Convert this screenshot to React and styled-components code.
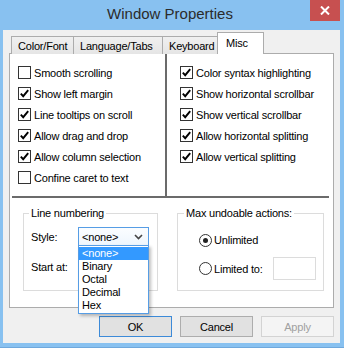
import React from 'react';
import styled, { createGlobalStyle } from 'styled-components';

const GlobalStyle = createGlobalStyle`
  body {
    margin: 0;
    background: #88c1f0;
    font-family: "Liberation Sans", Arial, sans-serif;
    font-size: 11px;
    letter-spacing: -0.2px;
    color: #000;
  }
`

const Window = styled.div`
  width: 344px;
  height: 348px;
  background: #88c1f0;
  display: flex;
  flex-direction: column;
  box-sizing: border-box;
  border-bottom: 1px solid #6fa8dc;
`

const TitleBar = styled.div`
  height: 30px;
  display: grid;
  grid-template-columns: 1fr auto 1fr;
  padding-right: 4px;
`

const Title = styled.div`
  grid-column: 2;
  line-height: 28px;
  font-size: 15px;
  letter-spacing: 0;
  color: #2b2b2b;
`

const CloseButton = styled.div`
  grid-column: 3;
  justify-self: end;
  width: 30px;
  height: 21px;
  background: #c75050;
  display: flex;
  align-items: center;
  justify-content: center;
`

const Client = styled.div`
  flex: 1;
  margin: 0 4px 4px 3px;
  background: #f0f0f0;
  display: flex;
  flex-direction: column;
`

const TabRow = styled.div`
  display: flex;
  align-items: flex-end;
  height: 22px;
  margin: 2px 0 -1px 8px;
`

const Tab = styled.div`
  box-sizing: border-box;
  width: ${p => p.$w}px;
  height: ${p => (p.$active ? 22 : 18)}px;
  border: 1px solid #acacac;
  border-bottom: none;
  margin-left: ${p => (p.$first ? 0 : -1)}px;
  background: ${p => (p.$active ? '#fff' : 'linear-gradient(#f0f0f0, #e5e5e5)')};
  padding: ${p => (p.$active ? '3px 0 0 8px' : '2px 0 0 6px')};
  line-height: 14px;
  position: relative;
  z-index: ${p => (p.$active ? 2 : 0)};
`

const Panel = styled.div`
  box-sizing: border-box;
  width: 325px;
  height: 255px;
  margin-left: 6px;
  background: #fff;
  border: 1px solid #acacac;
  display: flex;
  flex-direction: column;
`

const TopSection = styled.div`
  height: 142px;
  display: grid;
  grid-template-columns: 155px 2px 1fr;
`

const OptionColumn = styled.div`
  padding: 8px 0 0 ${p => p.$indent}px;
`

const VerticalRule = styled.div`
  background: #6b6b6b;
`

const HorizontalRule = styled.div`
  height: 2px;
  margin: 0 4px 0 2px;
  background: #6b6b6b;
`

const OptionRow = styled.label`
  display: flex;
  align-items: center;
  height: 21px;
  gap: 3px;
`

const Box = styled.span`
  box-sizing: border-box;
  width: 13px;
  height: 13px;
  border: 1px solid #333;
  background: #fff;
  display: flex;
  align-items: center;
  justify-content: center;
`

const BottomSection = styled.div`
  display: flex;
  padding: 8px 0 0 13px;
  gap: 19px;
`

const Group = styled.fieldset`
  box-sizing: border-box;
  margin: 0;
  width: ${p => p.$w}px;
  height: 85px;
  border: 1px solid #dcdcdc;
  padding: 0;
  min-inline-size: 0;
`

const Legend = styled.legend`
  padding: 0 2px;
  margin-left: ${p => p.$ml}px;
  line-height: 14px;
`

const GroupBody = styled.div`
  padding: ${p => p.$pad};
`

const FieldGrid = styled.div`
  display: grid;
  grid-template-columns: 47px 71px;
  grid-template-rows: 19px 19px;
  row-gap: 11px;
  align-items: center;
`

const Combo = styled.div`
  position: relative;
  box-sizing: border-box;
  height: 19px;
  border: 1px solid #569de5;
  background: linear-gradient(#fbfdff, #eef6fd);
  display: flex;
  align-items: center;
  justify-content: space-between;
  padding: 0 5px 0 3px;
`

const DropList = styled.ul`
  position: absolute;
  top: 100%;
  left: -1px;
  width: 71px;
  box-sizing: border-box;
  margin: 0;
  padding: 1px 0;
  list-style: none;
  background: #fff;
  border: 1px solid #569de5;
  box-shadow: 2px 2px 3px rgba(0, 0, 0, 0.25);
  z-index: 5;
`

const DropItem = styled.li`
  height: 13px;
  line-height: 13px;
  padding-left: 3px;
  background: ${p => (p.$selected ? '#3399ff' : 'transparent')};
  color: ${p => (p.$selected ? '#fff' : '#000')};
`

const SmallInput = styled.div`
  box-sizing: border-box;
  height: ${p => p.$h}px;
  border: 1px solid #dcdcdc;
  background: #fff;
  width: ${p => p.$w}px;
  margin-left: ${p => p.$ml || 0};
`

const RadioRow = styled.label`
  display: flex;
  align-items: center;
  gap: 2px;
  height: ${p => p.$h}px;
  margin-top: ${p => p.$mt || 0}px;
`

const RadioCircle = styled.span`
  box-sizing: border-box;
  width: 13px;
  height: 13px;
  border-radius: 50%;
  border: 1px solid #333;
  background: #fff;
  display: flex;
  align-items: center;
  justify-content: center;

  &::after {
    content: '';
    display: ${p => (p.$on ? 'block' : 'none')};
    width: 5px;
    height: 5px;
    border-radius: 50%;
    background: #222;
  }
`

const ButtonRow = styled.div`
  display: flex;
  justify-content: flex-end;
  gap: 8px;
  margin-top: 8px;
  padding-right: 6px;
`

const Button = styled.div`
  box-sizing: border-box;
  width: 73px;
  height: 21px;
  display: flex;
  align-items: center;
  justify-content: center;
  background: ${p => (p.$disabled ? '#f4f4f4' : '#e1e1e1')};
  border: 1px solid ${p => (p.$default ? '#3c8ad8' : p.$disabled ? '#d3d3d3' : '#adadad')};
  color: ${p => (p.$disabled ? '#a0a0a0' : '#000')};
`

const Check = () => (
  <svg width="11" height="11" viewBox="0 0 11 11">
    <polyline points="1.8,5.6 4.2,8.2 9.2,2.2" fill="none" stroke="#000" strokeWidth="1.9" />
  </svg>
)

const Option = ({ checked, children }) => (
  <OptionRow>
    <Box>{checked && <Check />}</Box>
    {children}
  </OptionRow>
)

const leftOptions = [
  ['Smooth scrolling', false],
  ['Show left margin', true],
  ['Line tooltips on scroll', true],
  ['Allow drag and drop', true],
  ['Allow column selection', true],
  ['Confine caret to text', false],
]

const rightOptions = [
  ['Color syntax highlighting', true],
  ['Show horizontal scrollbar', true],
  ['Show vertical scrollbar', true],
  ['Allow horizontal splitting', true],
  ['Allow vertical splitting', true],
]

const tabs = [
  ['Color/Font', 63],
  ['Language/Tabs', 90],
  ['Keyboard', 56],
  ['Misc', 47],
]

const styles = ['<none>', 'Binary', 'Octal', 'Decimal', 'Hex']

const App = () => (
  <>
    <GlobalStyle />
    <Window>
      <TitleBar>
        <Title>Window Properties</Title>
        <CloseButton>
          <svg width="10" height="9" viewBox="0 0 10 9">
            <path d="M1 0.5 L9 8.5 M9 0.5 L1 8.5" stroke="#fff" strokeWidth="2" />
          </svg>
        </CloseButton>
      </TitleBar>
      <Client>
        <TabRow>
          {tabs.map(([name, w], i) => (
            <Tab key={name} $w={w} $first={i === 0} $active={name === 'Misc'}>{name}</Tab>
          ))}
        </TabRow>
        <Panel>
          <TopSection>
            <OptionColumn $indent={8}>
              {leftOptions.map(([label, on]) => <Option key={label} checked={on}>{label}</Option>)}
            </OptionColumn>
            <VerticalRule />
            <OptionColumn $indent={13}>
              {rightOptions.map(([label, on]) => <Option key={label} checked={on}>{label}</Option>)}
            </OptionColumn>
          </TopSection>
          <HorizontalRule />
          <BottomSection>
            <Group $w={135}>
              <Legend $ml={5}>Line numbering</Legend>
              <GroupBody $pad="7px 0 0 7px">
                <FieldGrid>
                  <span>Style:</span>
                  <Combo>
                    <span>&lt;none&gt;</span>
                    <svg width="9" height="6" viewBox="0 0 9 6">
                      <path d="M1 1 L4.5 4.5 L8 1" fill="none" stroke="#444" strokeWidth="1.6" />
                    </svg>
                    <DropList>
                      {styles.map((s, i) => <DropItem key={s} $selected={i === 0}>{s}</DropItem>)}
                    </DropList>
                  </Combo>
                  <span>Start at:</span>
                  <SmallInput $w={50} $h={21} />
                </FieldGrid>
              </GroupBody>
            </Group>
            <Group $w={147}>
              <Legend $ml={6}>Max undoable actions:</Legend>
              <GroupBody $pad="10px 7px 0 21px">
                <RadioRow $h={20}>
                  <RadioCircle $on />
                  Unlimited
                </RadioRow>
                <RadioRow $h={23} $mt={7}>
                  <RadioCircle />
                  Limited to:
                  <SmallInput $w={43} $h={23} $ml="auto" />
                </RadioRow>
              </GroupBody>
            </Group>
          </BottomSection>
        </Panel>
        <ButtonRow>
          <Button $default>OK</Button>
          <Button>Cancel</Button>
          <Button $disabled>Apply</Button>
        </ButtonRow>
      </Client>
    </Window>
  </>
)

export default App
